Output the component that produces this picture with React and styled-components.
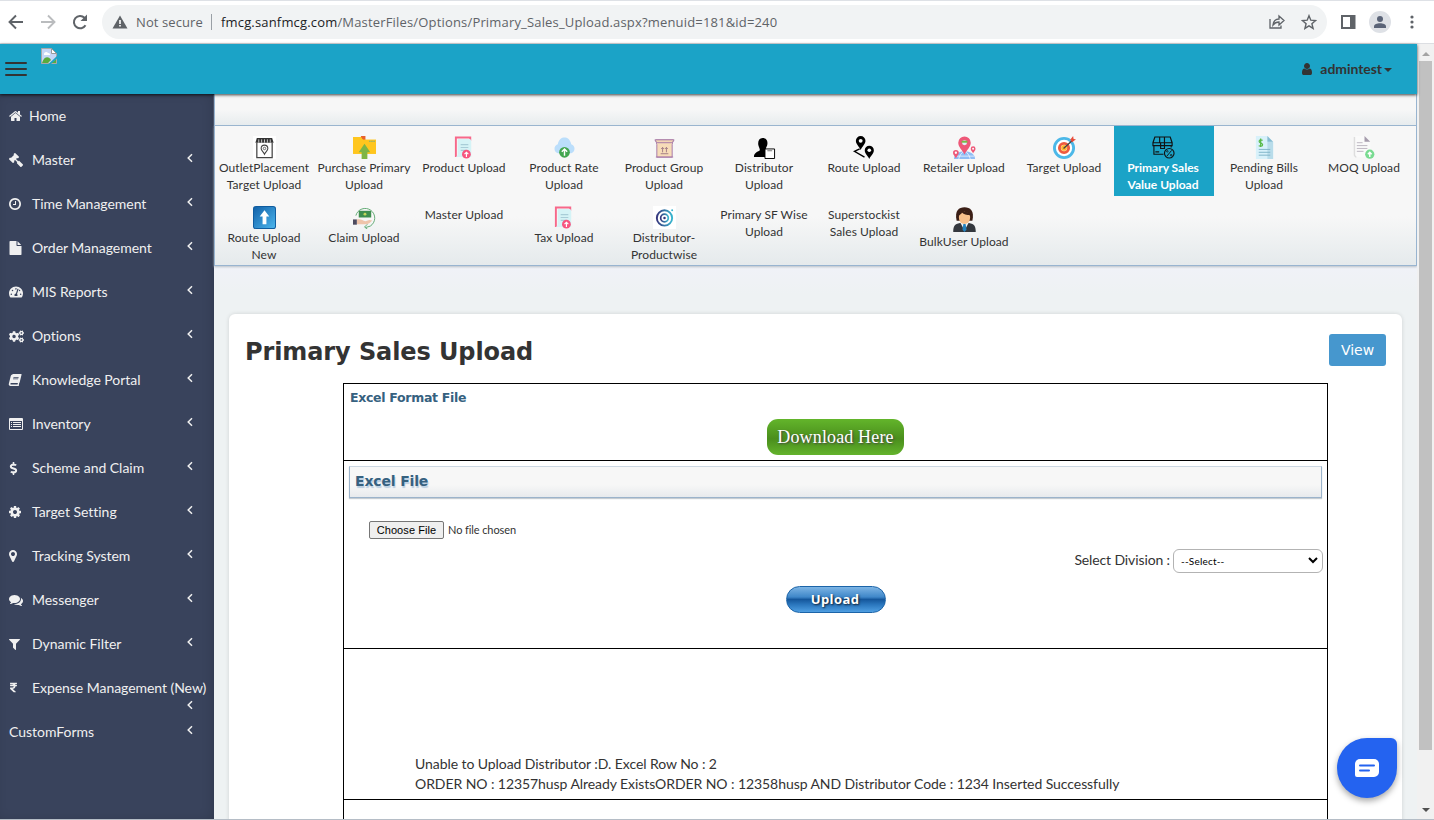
import React from "react";
import styled, { createGlobalStyle, css } from "styled-components";
import {
  FaTachometerAlt, FaCogs, FaBook, FaDollarSign, FaRupeeSign, FaGavel,
} from "react-icons/fa";

const Global = createGlobalStyle`
  * { box-sizing: border-box; }
  html, body { margin: 0; height: 820px; overflow: hidden; }
  body { font-family: Lato, "Liberation Sans", sans-serif; font-size: 14px; color: #333; background: #eef2f3; }
`;

const Window = styled.div`
  width: 1434px; height: 820px; display: flex; flex-direction: column;
  overflow: hidden; border-bottom: 1px solid #b5bdc6;
`;

/* Browser toolbar */
const BrowserBar = styled.div`
  height: 44px; flex: none; display: flex; align-items: center;
  background: #fff; border-bottom: 1px solid #dcdee2;
  border-top: 1px solid #dee1e6; padding: 0 20px 0 7px;
`;
const NavIcons = styled.div`
  display: flex; gap: 14px; width: 95px; flex: none;
`;
const AddressBar = styled.div`
  flex: 1; height: 34px; border-radius: 17px; background: #f1f3f4;
  display: flex; align-items: center; padding: 0 10px 0 10px;
  font: 13px "Open Sans", "Noto Sans", sans-serif; color: #5f6368;
`;
const NotSecure = styled.span`
  margin-left: 8px; padding-right: 8px; border-right: 1px solid #9aa0a6;
  line-height: 16px; width: 76px; white-space: nowrap; letter-spacing: 0.1px;
`;
const Url = styled.span`
  flex: 1; margin-left: 9px; white-space: nowrap; letter-spacing: 0.17px;
  b { font-weight: 400; color: #202124; }
`;
const BarActions = styled.div`
  display: flex; align-items: center; gap: 15px;
`;
const BrowserTools = styled.div`
  display: flex; align-items: center; margin-left: 14px;
`;
const Avatar = styled.span`
  width: 22px; height: 22px; border-radius: 50%; background: #dee1e6;
  display: flex; align-items: center; justify-content: center; margin: 0 19px 0 13px;
`;

/* Page frame */
const Viewport = styled.div`
  flex: 1; display: flex; min-height: 0;
`;
const Page = styled.div`
  width: 1417px; display: flex; flex-direction: column; position: relative;
`;
const Header = styled.header`
  height: 50px; flex: none; background: #1ba3c7; display: flex;
  padding: 0 25px 0 5px; position: relative; z-index: 2;
  box-shadow: 0 1px 3px rgba(0, 0, 0, 0.75);
`;
const Burger = styled.div`
  width: 22px; display: flex; flex-direction: column; gap: 4px; padding-top: 18px;
  i { height: 2px; background: #333; border-radius: 1px; }
`;
const Logo = styled.div`
  margin: 4px 0 0 14px; flex: 1;
`;
const User = styled.div`
  display: flex; align-items: center; font-weight: 700; color: #333; font-size: 14px;
  padding-bottom: 1px; letter-spacing: -0.05px;
  svg { margin-right: 7px; }
`;
const Caret = styled.i`
  border: 4px solid transparent; border-top-color: #333; border-bottom: 0; margin: 2px 0 0 2px;
`;
const Body = styled.div`
  flex: 1; display: flex; min-height: 0;
`;

/* Sidebar */
const Sidebar = styled.nav`
  width: 214px; flex: none; background: #39435c;
  box-shadow: inset -3px 0 14px -5px rgba(0, 0, 0, 0.25);
`;
const NavItem = styled.a`
  height: 44px; display: flex; align-items: center; padding: 0 20px 0 9px;
  color: #f0f0f0; font-size: 14px; letter-spacing: -0.03px; white-space: nowrap;
  & > span { flex: 1; padding-bottom: 2px; }
  ${(p) => p.$wrap && css`
    flex-wrap: wrap; padding-right: 6px; align-content: flex-start; padding-top: 13px;
    line-height: 17px;
    & > span { flex: 0 0 175px; min-width: 0; padding: 0; letter-spacing: -0.05px; }
  `}
`;
const IconSlot = styled.em`
  width: ${(p) => p.$w || 23}px; flex: none; display: flex; align-items: center;
`;
const Arrow = styled.svg`
  width: 6px; height: 10px; flex: none; margin: 0 1px 5px 0;
  ${(p) => p.$wrap && css`margin: 4px 15px 0 auto;`}
`;

/* Menu of upload pages */
const Content = styled.main`
  flex: 1; min-width: 0; display: flex; flex-direction: column;
  background: linear-gradient(#f0f2f8 171px, #eef2f3 200px);
`;
const Strip = styled.div`
  height: 32px; flex: none; border: 1px solid #98b4d0; border-top: 0;
  background: linear-gradient(#f7f7f7 50%, #e7ecee);
  box-shadow: 0 1px 1px #cfd6df;
`;
const Menu = styled.div`
  height: 140px; flex: none; display: grid; grid-template-columns: repeat(12, 100px);
  grid-auto-rows: 70px; border: 1px solid #98b4d0; border-top: 0;
  background: linear-gradient(#f7f7f7 65%, #e5eaec);
  box-shadow: 0 1px 2px #b9c0c8;
`;
const Tile = styled.div`
  padding-top: 10px; text-align: center; font-size: 12px; line-height: 17px;
  letter-spacing: 0.08px; white-space: pre-line; color: #333; margin-left: -1px; margin-right: 1px;
  svg { display: block; margin: 0 auto; }
  ${(p) => p.$active && css`background: #1ba3c7; color: #fff; font-weight: 700; letter-spacing: 0; padding-right: 2px;`}
`;

/* Upload card */
const Card = styled.section`
  margin: 48px 15px 0; flex: 1; background: #fff; border-radius: 6px 6px 0 0;
  box-shadow: 0 0 4px rgba(0, 0, 0, 0.13); padding: 20px 16px 0 17px;
`;
const TitleRow = styled.div`
  display: flex; justify-content: space-between; height: 49px;
`;
const Title = styled.h1`
  margin: 0 0 0 -1px; font: 700 24px/36px "DejaVu Sans", sans-serif; color: #333; white-space: nowrap;
  letter-spacing: -0.1px;
`;
const ViewButton = styled.button`
  width: 57px; height: 32px; border: 0; border-radius: 3px; background: #4697ce; color: #fff;
  font: 14px "DejaVu Sans", sans-serif; padding: 0;
`;
const FormTable = styled.div`
  width: 985px; margin-left: 97px; border: 1px solid #000; border-bottom: 0;
`;
const FormRow = styled.div`
  height: ${(p) => p.$h}px; border-bottom: 1px solid #000; padding: 5px;
  display: flex; flex-direction: column;
`;
const FormatLabel = styled.div`
  font: 700 12.5px/17px "DejaVu Sans", sans-serif; color: #36617f; letter-spacing: -0.3px;
  padding-left: 1px;
`;
const DownloadButton = styled.button`
  align-self: center; margin-top: 13px; width: 137px; height: 36px; border: 0; border-radius: 11px;
  background: linear-gradient(#63b52b, #4a8e1c 55%, #63b32c); color: #fff; padding: 0;
  font: 18px "Liberation Serif", serif; letter-spacing: 0.15px; white-space: nowrap;
  text-shadow: 1px 1px 2px #444;
`;
const SectionBar = styled.div`
  height: 32px; border: 1px solid #9bb3cb; border-top-color: #cbd7e2;
  background: linear-gradient(#f7f7f7 60%, #e7eaed); box-shadow: 0 1px 1px #c5ccd2;
  font: 700 14px/29px "DejaVu Sans", sans-serif; color: #36617f; padding-left: 5px;
  text-shadow: 1px 2px 1px #b9cde0; letter-spacing: -0.15px;
`;
const FilePicker = styled.div`
  display: flex; align-items: center; gap: 4px; margin: 23px 0 0 20px; font-size: 11px;
  letter-spacing: -0.1px; white-space: nowrap;
  & > span { padding-bottom: 2px; }
`;
const FileButton = styled.button`
  width: 75px; height: 18px; border: 1px solid #767676; border-radius: 2px; background: #efefef;
  font: 11px "Liberation Sans", sans-serif; padding: 0; color: #000; letter-spacing: 0.08px;
`;
const Division = styled.div`
  display: flex; justify-content: flex-end; align-items: center; gap: 3px; margin: 10px -1px 0 0;
  font-size: 14px; letter-spacing: -0.12px;
  & > span { padding-bottom: 4px; }
`;
const SelectBox = styled.div`
  width: 150px; height: 24px; border: 1px solid #b3b3b3; border-radius: 6px; background: #fff;
  display: flex; align-items: center; justify-content: space-between; padding: 0 4px 1px 7px;
  font-size: 10px; color: #000; letter-spacing: 0.2px;
`;
const UploadButton = styled.button`
  align-self: center; margin: 13px 0 0 1px; width: 100px; height: 27px; border-radius: 14px;
  padding: 0 2px 2px 0; border: 1px solid #1c64a8; color: #fff;
  font: 700 13px "Open Sans", sans-serif; letter-spacing: 0.4px;
  background: linear-gradient(#7db4e4, #3f87c9 40%, #15579c 50%, #2a76bd 70%, #4f9fe2);
  text-shadow: 1px 1px 2px #123;
`;
const Messages = styled.div`
  margin: 100px 0 0 66px; line-height: 20px; font-size: 14px; white-space: nowrap; letter-spacing: -0.07px;
`;

/* Overlay chat launcher */
const Chat = styled.div`
  position: absolute; right: 20px; bottom: 21px; width: 60px; height: 60px; z-index: 3;
  border-radius: 30px 6px 30px 30px; background: #2463f0; box-shadow: 0 3px 6px rgba(0, 0, 0, 0.35);
  display: flex; align-items: center; justify-content: center;
`;

const Scrollbar = styled.div`
  width: 17px; background: #f1f1f1; display: flex; flex-direction: column; align-items: center;
  justify-content: space-between; padding: 8px 0 7px; position: relative;
`;
const Thumb = styled.div`
  width: 13px; height: 689px; background: #c1c1c1; margin-top: 5px; margin-bottom: auto;
`;
const ScrollArrow = styled.i`
  border: 4px solid transparent;
  ${(p) => p.$up
    ? css`border-bottom-color: #a3a3a3; border-top: 0;`
    : css`border-top-color: #505050; border-bottom: 0;`}
`;

const paths = {
  home: "M1472 992v480q0 26-19 45t-45 19h-384v-384h-256v384h-384q-26 0-45-19t-19-45v-480q0-1 .5-3t.5-3l575-474 575 474q1 2 1 6zm223-69l-62 74q-8 9-21 11h-3q-13 0-21-7l-692-577-692 577q-12 8-24 7-13-2-21-11l-62-74q-8-10-7-23.5t11-21.5l719-599q32-26 76-26t76 26l244 204v-195q0-14 9-23t23-9h192q14 0 23 9t9 23v408l219 182q10 8 11 21.5t-7 23.5z",
  filter: "M1595 295q17 41-14 70l-493 493v742q0 42-39 59-13 5-25 5-27 0-45-19l-256-256q-19-19-19-45v-486l-493-493q-31-29-14-70 17-39 59-39h1280q42 0 59 39z",
  clock: "M1024 544v448q0 14-9 23t-23 9h-320q-14 0-23-9t-9-23v-64q0-14 9-23t23-9h224v-352q0-14 9-23t23-9h64q14 0 23 9t9 23zm416 352q0-148-73-273t-198-198-273-73-273 73-198 198-73 273 73 273 198 198 273 73 273-73 198-198 73-273zm224 0q0 209-103 385.5t-279.5 279.5-385.5 103-385.5-103-279.5-279.5-103-385.5 103-385.5 279.5-279.5 385.5-103 385.5 103 279.5 279.5 103 385.5z",
  cog: "M1152 896q0-106-75-181t-181-75-181 75-75 181 75 181 181 75 181-75 75-181zm512-109v222q0 12-8 23t-20 13l-185 28q-19 54-39 91 35 50 107 138 10 12 10 25t-9 23q-27 37-99 108t-94 71q-12 0-26-9l-138-108q-44 23-91 38-16 136-29 186-7 28-36 28h-222q-14 0-24.5-8.5t-11.5-21.5l-28-184q-49-16-90-37l-141 107q-10 9-25 9-14 0-25-11-126-114-165-168-7-10-7-23 0-12 8-23 15-21 51-66.5t54-70.5q-27-50-41-99l-183-27q-13-2-21-12.5t-8-23.5v-222q0-12 8-23t19-13l186-28q14-46 39-92-40-57-107-138-10-12-10-24 0-10 9-23 26-36 98.5-107.5t94.5-71.5q13 0 26 10l138 107q44-23 91-38 16-136 29-186 7-28 36-28h222q14 0 24.5 8.5t11.5 21.5l28 184q49 16 90 37l142-107q9-9 24-9 13 0 25 10 129 119 165 170 7 8 7 22 0 12-8 23-15 21-51 66.5t-54 70.5q26 50 41 98l183 28q13 2 21 12.5t8 23.5z",
  marker: "M1152 640q0-106-75-181t-181-75-181 75-75 181 75 181 181 75 181-75 75-181zm256 0q0 109-33 179l-364 774q-16 33-47.5 52t-67.5 19-67.5-19-46.5-52l-365-774q-33-70-33-179 0-212 150-362t362-150 362 150 150 362z",
  user: "M1536 1399q0 109-62.5 187t-150.5 78h-854q-88 0-150.5-78t-62.5-187q0-85 8.5-160.5t31.5-152 58.5-131 94-89 134.5-34.5q131 128 313 128t313-128q76 0 134.5 34.5t94 89 58.5 131 31.5 152 8.5 160.5zm-256-887q0 159-112.5 271.5t-271.5 112.5-271.5-112.5-112.5-271.5 112.5-271.5 271.5-112.5 271.5 112.5 112.5 271.5z",
  comments: "M1408 768q0 139-94 257t-256.5 186.5-353.5 68.5q-86 0-176-16-124 88-278 128-36 9-86 16h-3q-11 0-20.5-8t-11.5-21q-1-3-1-6.5t.5-6.5 2-6l2.5-5 3.5-5.5 4-5 4.5-5 4-4.5q5-6 23-25t26-29.5 22.5-29 25-38.5 20.5-44q-124-72-195-177t-71-224q0-139 94-257t256.5-186.5 353.5-68.5 353.5 68.5 256.5 186.5 94 257zm384 256q0 120-71 224.5t-195 176.5q10 24 20.5 44t25 38.5 22.5 29 26 29.5 23 25q1 1 4 4.5t4.5 5 4 5 3.5 5.5l2.5 5 2 6 .5 6.5-1 6.5q-3 14-13 22t-22 7q-50-7-86-16-154-40-278-128-90 16-176 16-271 0-472-132 58 4 88 4 161 0 309-45t264-129q125-92 192-212t67-254q0-77-23-152 129 71 204 178t75 230z",
  file: "M1152 512v-472q22 14 36 28l408 408q14 14 28 36h-472zm-128 32q0 40 28 68t68 28h544v1056q0 40-28 68t-68 28h-1344q-40 0-68-28t-28-68v-1600q0-40 28-68t68-28h800v544z",
};

const Glyph = ({ name, box = "0 0 1792 1792", w = 14, h = 14 }) => (
  <svg width={w} height={h} viewBox={box} fill="currentColor"><path d={paths[name]} /></svg>
);
const ListGlyph = () => (
  <svg width="14" height="12" viewBox="0 0 14 12" fill="currentColor">
    <path fillRule="evenodd" d="M1 0h12a1 1 0 0 1 1 1v10a1 1 0 0 1-1 1H1a1 1 0 0 1-1-1V1a1 1 0 0 1 1-1zM1 3v8h12V3z" />
    <path d="M2 4h1v1H2zM4 4h8v1H4zM2 6h1v1H2zM4 6h8v1H4zM2 8h1v1H2zM4 8h8v1H4z" />
  </svg>
);

const MirroredGavel = styled(FaGavel)`transform: scaleX(-1);`;
const SlantedBook = styled(FaBook)`transform: skewX(-14deg);`;
const Dollar = styled(FaDollarSign)`margin-left: -2px;`;
const Rupee = styled(FaRupeeSign)`margin-left: -1px;`;

const navItems = [
  { label: "Home", icon: <Glyph name="home" box="90 0 1612 1792" w={13} />, slot: 20, leaf: true },
  { label: "Master", icon: <MirroredGavel size={14} /> },
  { label: "Time Management", icon: <Glyph name="clock" box="128 128 1536 1536" w={12} h={12} /> },
  { label: "Order Management", icon: <Glyph name="file" box="128 0 1536 1792" w={13} /> },
  { label: "MIS Reports", icon: <FaTachometerAlt size={14} /> },
  { label: "Options", icon: <FaCogs size={15} /> },
  { label: "Knowledge Portal", icon: <SlantedBook size={12} /> },
  { label: "Inventory", icon: <ListGlyph /> },
  { label: "Scheme and Claim", icon: <Dollar size={13} /> },
  { label: "Target Setting", icon: <Glyph name="cog" box="128 128 1536 1536" w={12} h={12} /> },
  { label: "Tracking System", icon: <Glyph name="marker" box="384 128 1024 1536" w={8} h={12} /> },
  { label: "Messenger", icon: <Glyph name="comments" /> },
  { label: "Dynamic Filter", icon: <Glyph name="filter" box="190 128 1412 1664" w={11} h={13} /> },
  { label: "Expense Management (New)", icon: <Rupee size={11} />, wrap: true },
  { label: "CustomForms" },
];

const Pic = ({ size = 23, children }) => (
  <svg width={size} height={size} viewBox="0 0 24 24" fill="none">{children}</svg>
);
const Invoice = () => (
  <Pic>
    <path d="M3 22V1.5h15V5" stroke="#f7688a" strokeWidth="2" />
    <path d="M5 3h13l1 2v17H3q2-1 2-3z" fill="#d5f3f6" />
    <path d="M8 9h8M8 12h8M8 15h6" stroke="#a9cdd8" strokeWidth="1.2" />
    <circle cx="14" cy="19" r="4.6" fill="#f7557f" />
    <path d="M14 22v-5m-2 2 2-2 2 2" stroke="#fff" strokeWidth="1.2" />
  </Pic>
);
const Pin = ({ x, y, s = 1, fill, dot = "#fff" }) => (
  <g transform={`translate(${x} ${y}) scale(${s})`}>
    <path d="M0 12C-2 8-5 6-5 2.500a5 5 0 0 1 10 0C5 6 2 8 0 12z" fill={fill} />
    <circle cy="2.500" r="2" fill={dot} />
  </g>
);

const pics = {
  outlet: (
    <Pic>
      <path d="M0 0h24v24H0z" fill="#fff" />
      <path d="M4 7v15.500h16V7" stroke="#444" strokeWidth="1.3" />
      <path d="M4 2h16l1.500 5h-19z" fill="#333" />
      <path d="M6 3.500v3.500m3-3.500v3.500m3-3.500v3.500m3-3.500v3.500m3-3.500v3.500" stroke="#ddd" strokeWidth=".9" />
      <path d="M12 19c-1.500-3-3.500-4-3.500-6a3.500 3.500 0 0 1 7 0c0 2-2 3-3.500 6z" stroke="#444" strokeWidth="1.1" />
      <circle cx="12" cy="13" r="1.300" stroke="#444" strokeWidth=".8" />
    </Pic>
  ),
  folder: (
    <Pic>
      <path d="M0 1h11l2 3h11v14.500H0z" fill="#fdbb12" />
      <path d="M8 0h5v4h-3z" fill="#e8622c" />
      <path d="M0 1h8l2.500 3H24v14.500H0z" fill="#ffc61e" />
      <path d="M17 5.500h6" stroke="#4aa3a0" strokeWidth="1.2" strokeDasharray="1.200 1" />
      <path d="m12 8 6 9h-3v7H9v-7H6z" fill="#7db544" />
    </Pic>
  ),
  invoice: <Invoice />,
  cloud: (
    <Pic>
      <path d="M5 18a5 5 0 0 1 0-9.500C6 3.500 9 1.500 12 1.500s6 2 7 7a5 5 0 0 1 0 9.500z" fill="#bbdefb" />
      <circle cx="12" cy="17" r="5.600" fill="#43a650" />
      <path d="M12 20.500v-7m-2.800 3 2.800-3 2.800 3" stroke="#fff" strokeWidth="1.500" />
    </Pic>
  ),
  box: (
    <Pic>
      <path d="M3 4h18l-1 5v13H4V9z" fill="#f7dcb8" stroke="#a678a8" />
      <path d="M2 4q1 3 3 3h14q2 0 3-3zM3 22h18" fill="#f3d6b4" stroke="#a678a8" />
      <path d="M10 17v-5m-1.500 1.500L10 12l1.500 1.500M14 17v-5m-1.500 1.500L14 12l1.500 1.500M8 18.500h8" stroke="#8c6478" strokeWidth=".8" />
    </Pic>
  ),
  distributor: (
    <Pic>
      <path d="M10 2c4 0 5.500 3 5 6.500-.3 2.500-1.500 3-1.500 5L18 17v5H1c0-4 2-5 6-7 .5-2-1-3-1.500-6C5 5 6.500 2 10 2z" fill="#000" />
      <path d="M12.500 13.500h10v10h-10z" fill="#fff" stroke="#000" />
      <path d="M15 14h5v2h-5z" fill="#999" />
    </Pic>
  ),
  route: (
    <Pic>
      <Pin x={8} y={2.500} fill="#000" />
      <Pin x={17} y={12.500} s={0.95} fill="#000" />
      <path d="M7 13.500 1.500 16 12 22" stroke="#000" strokeWidth="1.400" />
    </Pic>
  ),
  retailer: (
    <Pic>
      <path d="M1 24c0-5 5-8 11-8s11 3 11 8z" fill="#8fbdf5" />
      <path d="M6 24c1-4 3-7 6-8 3 1 5 4 6 8M2 21h20" stroke="#fff" strokeWidth=".7" />
      <Pin x={12} y={3.800} s={1.300} fill="#ee5878" dot="#dff1f9" />
      <path d="M9 5h6v2H9z" fill="#75bd45" />
      <Pin x={3} y={16} s={0.6} fill="#ee5878" />
      <Pin x={21} y={12} s={0.5} fill="#ee5878" />
    </Pic>
  ),
  target: (
    <Pic>
      <circle cx="11.500" cy="12.500" r="10" fill="#fff" stroke="#4cb8e8" strokeWidth="3" />
      <circle cx="11.500" cy="12.500" r="4.800" fill="#fff3e8" stroke="#ef5a3e" strokeWidth="3" />
      <circle cx="11.500" cy="12.500" r="3" fill="#ffb52e" />
      <path d="m11 13 10-9" stroke="#444" strokeWidth="1.400" />
      <path d="m18 4 3-4 .5 3 2.500.5-4 3z" fill="#e94b38" />
    </Pic>
  ),
  sales: (
    <Pic>
      <path d="M3 1h16l2 6v3H1V7zM2 10v9h10M20 10v2M1 7h20M8 1v6M13 1v6M9 7v6h4V7M3.500 16.500h4" stroke="#111" strokeWidth="1.200" />
      <circle cx="18" cy="18" r="5" stroke="#111" strokeWidth="1.200" />
      <path d="m15.500 21 5-6" stroke="#111" />
      <circle cx="16" cy="16" r=".8" stroke="#111" strokeWidth=".8" /><circle cx="20" cy="20" r=".8" stroke="#111" strokeWidth=".8" />
    </Pic>
  ),
  bills: (
    <Pic>
      <path d="M3 0h12l6 6v18H3z" fill="#d8f1fa" />
      <path d="M15 0v6h6v18h-6z" fill="#b8dcea" /><path d="m15 0 6 6h-6z" fill="#86bbd1" />
      <path d="M6 14h12M6 17h12M6 20h12" stroke="#7fb4c9" />
      <path d="M10 4.500Q6 3 6.500 6c.5 1.500 3 1 3.500 3 0 2-3 2-4 1M8 2.500v9" stroke="#58b947" strokeWidth="1.300" />
    </Pic>
  ),
  moq: (
    <Pic>
      <path d="M3 0h9l6 6v16H3q-2-1-2-3V2z" fill="#fafafa" />
      <path d="M1.500 1v19q1 2 2 2" stroke="#dedede" strokeWidth="1.500" />
      <path d="m12 0 6 6h-6z" fill="#a59cac" />
      <path d="M4 7h6M4 10h11M4 13h11M4 16h7" stroke="#bcb6c0" />
      <circle cx="17.500" cy="19" r="4.800" fill="#79db91" />
      <path d="M17.500 22v-5m-2 2 2-2 2 2" stroke="#fff" strokeWidth="1.500" />
    </Pic>
  ),
  arrow: (
    <Pic>
      <defs><linearGradient id="blue" x2="1" y2="1"><stop stopColor="#1262aa" /><stop offset="1" stopColor="#4cb5ec" /></linearGradient></defs>
      <rect width="24" height="24" rx="3" fill="#0f5c9f" /><rect x="1" y="1" width="22" height="22" rx="2" fill="url(#blue)" />
      <path d="m12 4.500 5 6.500h-3v8h-4v-8H7z" fill="#fff" />
    </Pic>
  ),
  claim: (
    <Pic>
      <path d="M3 10a10 10 0 1 1 15 11l-5 1.500" stroke="#5fa972" strokeWidth="1" />
      <path d="m15 19-3 3 3 2" stroke="#5fa972" />
      <path d="M6 5h13v7H6z" fill="#3f8e4f" /><circle cx="12.500" cy="8.500" r="1.500" fill="#c5d65b" />
      <path d="M4 14c4-1 6 1 9 2l4-1.500 3 .5c-2 2-4 4-7 4H4z" fill="#efc4aa" />
      <path d="M0 14h4v5.500H0z" fill="#4c4a5e" />
    </Pic>
  ),
  productwise: (
    <Pic>
      <defs><linearGradient id="ring"><stop stopColor="#35357c" /><stop offset="1" stopColor="#38b6cf" /></linearGradient></defs>
      <path d="M0 0h24v24H0z" fill="#fff" />
      <circle cx="12" cy="12.500" r="8" stroke="url(#ring)" strokeWidth="2" />
      <circle cx="12" cy="12.500" r="4" stroke="url(#ring)" strokeWidth="1.800" />
      <circle cx="12" cy="12.500" r="1.300" fill="#35357c" /><circle cx="20" cy="4.500" r="1" fill="#38b6cf" />
    </Pic>
  ),
  bulk: (
    <Pic size={27}>
      <path d="M2 23c0-5 1-7 6-8l4 1 4-1c5 1 6 3 6 8z" fill="#34383e" />
      <path d="m8.500 15 3.500 7 3.500-7z" fill="#eef3f7" /><path d="m11 16-.8 5L12 23l1.800-2-.8-5z" fill="#2582bd" />
      <path d="M5 13C3 4 7 1 12 1s9 3 7 12z" fill="#3b1f16" />
      <ellipse cx="12" cy="10.500" rx="5" ry="5.500" fill="#f8c08b" />
      <path d="M7 8c0-4 10-4 10 0-3 0-6-.5-7-2-1 1-2 2-3 2z" fill="#3b1f16" />
    </Pic>
  ),
};

const tiles = [
  ["outlet", "OutletPlacement\nTarget Upload"], ["folder", "Purchase Primary\nUpload"],
  ["invoice", "Product Upload"], ["cloud", "Product Rate\nUpload"],
  ["box", "Product Group\nUpload"], ["distributor", "Distributor\nUpload"],
  ["route", "Route Upload"], ["retailer", "Retailer Upload"], ["target", "Target Upload"],
  ["sales", "Primary Sales\nValue Upload"], ["bills", "Pending Bills\nUpload"], ["moq", "MOQ Upload"],
  ["arrow", "Route Upload\nNew"], ["claim", "Claim Upload"], [null, "Master Upload"],
  ["invoice", "Tax Upload"], ["productwise", "Distributor-\nProductwise"],
  [null, "Primary SF Wise\nUpload"], [null, "Superstockist\nSales Upload"], ["bulk", "BulkUser Upload"],
];

const BrowserToolbar = () => (
  <BrowserBar>
    <NavIcons>
      <svg width="18" height="18" viewBox="0 0 18 18" fill="none" stroke="#5f6368" strokeWidth="1.900"><path d="M16 9H3M9 2.500 2.500 9 9 15.500" /></svg>
      <svg width="18" height="18" viewBox="0 0 18 18" fill="none" stroke="#babcbe" strokeWidth="1.900"><path d="M2 9h13M9 2.500 15.500 9 9 15.500" /></svg>
      <svg width="18" height="18" viewBox="0 0 18 18" fill="none"><path d="M14.500 12.200A6.200 6.200 0 1 1 13.500 4.700L15 6.500" stroke="#5f6368" strokeWidth="2" /><path d="M16 1.500V8H9.500z" fill="#5f6368" /></svg>
    </NavIcons>
    <AddressBar>
      <svg width="16" height="14" viewBox="0 0 16 14"><path d="M8 .5 15.500 13.500H.5z" fill="#5f6368" /><path d="M7.200 5h1.600v4H7.200zm0 5h1.600v1.600H7.200z" fill="#fff" /></svg>
      <NotSecure>Not secure</NotSecure>
      <Url><b>fmcg.sanfmcg.com</b>/MasterFiles/Options/Primary_Sales_Upload.aspx?menuid=181&amp;id=240</Url>
      <BarActions>
        <svg width="18" height="16" viewBox="0 0 18 16" fill="none" stroke="#5f6368" strokeWidth="1.300"><path d="M2 5v9h11v-2.500M5 11c.5-4 2.500-6 6-6V2l5 4.500-5 4.500V8c-3 0-4.500 1-6 3z" /></svg>
        <svg width="16" height="16" viewBox="0 0 16 16" fill="none" stroke="#5f6368" strokeWidth="1.400"><path d="m8 1.700 1.800 4.500 4.800.4-3.700 3.100 1.200 4.700L8 11.900l-4.100 2.500 1.200-4.700L1.400 6.600l4.800-.4z" /></svg>
      </BarActions>
    </AddressBar>
    <BrowserTools>
      <svg width="15" height="14" viewBox="0 0 15 14"><path d="M1 1h12v12H1z" fill="none" stroke="#5f6368" strokeWidth="2" /><path d="M9 0h5.500v14H9z" fill="#5f6368" /></svg>
      <Avatar><svg width="12" height="12" viewBox="0 0 12 12" fill="#5b6478"><circle cx="6" cy="3" r="3" /><path d="M0 12v-1.500C0 8.500 3 7.300 6 7.300s6 1.200 6 3.200V12z" /></svg></Avatar>
      <svg width="4" height="14" viewBox="0 0 4 14" fill="#5f6368"><circle cx="2" cy="2" r="1.600" /><circle cx="2" cy="7" r="1.600" /><circle cx="2" cy="12" r="1.600" /></svg>
    </BrowserTools>
  </BrowserBar>
);

export default function App() {
  return (
    <Window>
      <Global />
      <BrowserToolbar />
      <Viewport>
        <Page>
          <Header>
            <Burger><i /><i /><i /></Burger>
            <Logo>
              <svg width="16" height="16" viewBox="0 0 16 16">
                <path d="M.5.500h10l5 5v10H.5z" fill="#c5d6f6" stroke="#a9a9a9" />
                <path d="M3 6c0-2 3-3 4-1 2 0 2 1 2 2H3z" fill="#fff" />
                <path d="M1 15c2-7 7-7 9-3l-3 3zM10 15l5-4v4z" fill="#5aab3c" />
                <path d="M10.500.500v5h5z" fill="#fff" stroke="#999" />
                <path d="m7.500 16 8.500-8v2.500L10 16z" fill="#1ba3c7" />
              </svg>
            </Logo>
            <User><Glyph name="user" box="256 128 1280 1536" w={12} h={12} />admintest<Caret /></User>
          </Header>
          <Body>
            <Sidebar>
              {navItems.map((n) => (
                <NavItem key={n.label} $wrap={n.wrap}>
                  {n.icon && <IconSlot $w={n.slot}>{n.icon}</IconSlot>}
                  <span>{n.label}</span>
                  {!n.leaf && (
                    <Arrow $wrap={n.wrap} viewBox="0 0 6 10" fill="none" stroke="#f0f0f0" strokeWidth="1.500">
                      <path d="M5 1.200 1.200 5 5 8.800" />
                    </Arrow>
                  )}
                </NavItem>
              ))}
            </Sidebar>
            <Content>
              <Strip />
              <Menu>
                {tiles.map(([pic, label]) => (
                  <Tile key={label} $active={pic === "sales"}>{pic && pics[pic]}{label}</Tile>
                ))}
              </Menu>
              <Card>
                <TitleRow>
                  <Title>Primary Sales Upload</Title>
                  <ViewButton>View</ViewButton>
                </TitleRow>
                <FormTable>
                  <FormRow $h={77}>
                    <FormatLabel>Excel Format File</FormatLabel>
                    <DownloadButton>Download Here</DownloadButton>
                  </FormRow>
                  <FormRow $h={188}>
                    <SectionBar>Excel File</SectionBar>
                    <FilePicker><FileButton>Choose File</FileButton><span>No file chosen</span></FilePicker>
                    <Division>
                      <span>Select Division :</span>
                      <SelectBox>
                        --Select--
                        <svg width="10" height="7" viewBox="0 0 10 7" fill="none" stroke="#000" strokeWidth="2"><path d="m1 1 4 4 4-4" /></svg>
                      </SelectBox>
                    </Division>
                    <UploadButton>Upload</UploadButton>
                  </FormRow>
                  <FormRow $h={151}>
                    <Messages>
                      <div>Unable to Upload Distributor :D. Excel Row No : 2</div>
                      <div>ORDER NO : 12357husp Already ExistsORDER NO : 12358husp AND Distributor Code : 1234 Inserted Successfully</div>
                    </Messages>
                  </FormRow>
                  <FormRow $h={40} />
                </FormTable>
              </Card>
            </Content>
          </Body>
          <Chat>
            <svg width="24" height="18" viewBox="0 0 24 18"><path d="M5 0h14a5 5 0 0 1 5 5v8a5 5 0 0 1-5 5H2a2 2 0 0 1-2-2V5a5 5 0 0 1 5-5z" fill="#fff" /><path d="M5 6.500h14M5 11.500h9" stroke="#2463f0" strokeWidth="2" strokeLinecap="round" /></svg>
          </Chat>
        </Page>
        <Scrollbar><ScrollArrow $up /><Thumb /><ScrollArrow /></Scrollbar>
      </Viewport>
    </Window>
  );
}
